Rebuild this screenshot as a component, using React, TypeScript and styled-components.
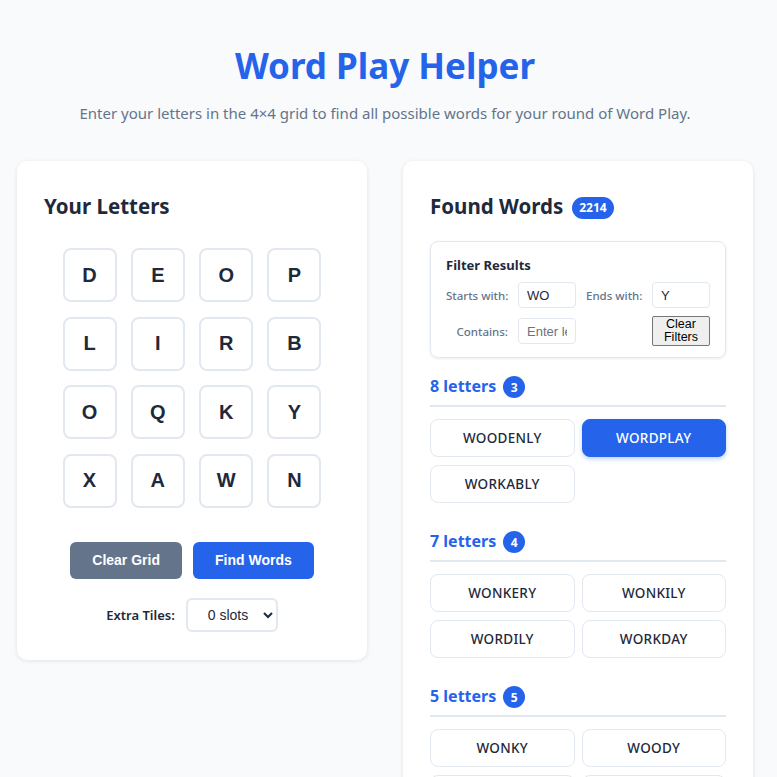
import React from "react";
import styled, { createGlobalStyle } from "styled-components";

const Global = createGlobalStyle`
  html, body { margin: 0; padding: 0; background: #f8fafc; }
  body { font-family: "Noto Sans", "Open Sans", sans-serif; color: #1e293b; }
  * { box-sizing: border-box; }
`;

const Page = styled.div`
  padding: 38px 24px 0 17px;
`;

const Header = styled.header`
  text-align: center;
  margin-bottom: 37px;
`;

const Title = styled.h1`
  margin: 0;
  font-size: 35px;
  font-weight: 700;
  color: #2563eb;
  line-height: 56px;
`;

const Subtitle = styled.p`
  margin: 8px 0 0;
  font-size: 15px;
  color: #64748b;
  line-height: 22px;
`;

const Columns = styled.div`
  display: grid;
  grid-template-columns: 350px 350px;
  gap: 36px;
  align-items: start;
`;

const Card = styled.section`
  background: #fff;
  border-radius: 10px;
  box-shadow: 0 1px 4px rgba(15, 23, 42, 0.1);
  padding: 30px 27px 28px;
`;

const CardTitle = styled.h2`
  margin: 0;
  font-size: 20.5px;
  font-weight: 700;
  color: #1e293b;
  line-height: 30px;
  display: flex;
  align-items: center;
  gap: 9px;
`;

const Grid = styled.div`
  display: grid;
  grid-template-columns: repeat(4, 54px);
  gap: 14.67px 14.33px;
  justify-content: center;
  margin-top: 27px;
`;

const Tile = styled.div`
  width: 54px;
  height: 54px;
  border: 2px solid #e2e8f0;
  border-radius: 8px;
  display: flex;
  align-items: center;
  justify-content: center;
  font-family: "Liberation Sans", Arial, sans-serif;
  font-weight: 700;
  font-size: 20px;
  color: #1e293b;
`;

const Actions = styled.div`
  display: flex;
  justify-content: center;
  gap: 11px;
  margin-top: 34px;
`;

const ActionButton = styled.button<{ $primary?: boolean }>`
  border: none;
  border-radius: 6px;
  height: 37px;
  padding: 0 22px;
  font-family: "Liberation Sans", Arial, sans-serif;
  font-weight: 700;
  font-size: 14px;
  color: #fff;
  background: ${(p) => (p.$primary ? "#2563eb" : "#64748b")};
  cursor: pointer;
`;

const ExtraRow = styled.div`
  display: flex;
  justify-content: center;
  align-items: center;
  gap: 11px;
  margin-top: 19px;
`;

const ExtraLabel = styled.label`
  font-size: 13px;
  font-weight: 600;
  color: #1e293b;
`;

const Select = styled.select`
  width: 92px;
  height: 34px;
  border: 2px solid #e2e8f0;
  border-radius: 6px;
  background: #fff;
  font-family: "Liberation Sans", Arial, sans-serif;
  font-size: 14px;
  color: #1e293b;
  padding: 0 8px 0 16px;
`;

const Badge = styled.span<{ $round?: boolean }>`
  display: inline-flex;
  align-items: center;
  justify-content: center;
  background: #2563eb;
  color: #fff;
  font-size: 12px;
  font-weight: 700;
  height: 22px;
  min-width: 22px;
  padding: ${(p) => (p.$round ? "0" : "0 7px")};
  border-radius: 11px;
  margin-top: 3px;
`;

const FilterBox = styled.div`
  margin-top: 20px;
  border: 1px solid #e2e8f0;
  border-radius: 8px;
  box-shadow: 0 1px 3px rgba(15, 23, 42, 0.08);
  padding: 14px 14px 11px 15px;
`;

const FilterTitle = styled.h3`
  margin: 0 0 8px;
  font-size: 13px;
  font-weight: 700;
  color: #1e293b;
  line-height: 18px;
`;

const FilterGrid = styled.div`
  display: grid;
  grid-template-columns: 62px 58px 56px 58px;
  column-gap: 10px;
  row-gap: 8px;
  align-items: center;
`;

const FilterLabel = styled.label`
  font-size: 11.5px;
  font-weight: 500;
  color: #64748b;
  text-align: right;
  white-space: nowrap;
`;

const FilterInput = styled.input`
  width: 58px;
  height: 26px;
  border: 1px solid #e2e8f0;
  border-radius: 4px;
  padding: 0 8px;
  font-family: "Liberation Sans", Arial, sans-serif;
  font-size: 13px;
  color: #1e293b;
  &::placeholder { color: #6b7280; }
`;

const ClearFilters = styled.button`
  width: 58px;
  height: 30px;
  padding: 0;
  font-family: "Liberation Sans", Arial, sans-serif;
  font-size: 12.5px;
  line-height: 13px;
  color: #000;
  background: #efefef;
  border: 1px solid #767676;
  border-radius: 2px;
`;

const Section = styled.div`
  margin-top: 15px;
  & + & { margin-top: 25px; }
`;

const SectionHead = styled.div`
  display: flex;
  align-items: center;
  gap: 7px;
  padding-bottom: 7px;
  border-bottom: 2px solid #e2e8f0;
  margin-bottom: 12px;
`;

const SectionTitle = styled.h4`
  margin: 0;
  font-size: 16px;
  font-weight: 700;
  color: #2563eb;
`;

const WordGrid = styled.div`
  display: grid;
  grid-template-columns: 1fr 1fr;
  gap: 8px 7px;
`;

const Word = styled.div<{ $active?: boolean }>`
  height: 38px;
  display: flex;
  align-items: center;
  justify-content: center;
  border-radius: 8px;
  border: 1px solid ${(p) => (p.$active ? "#2563eb" : "#e2e8f0")};
  background: ${(p) => (p.$active ? "#2563eb" : "#fff")};
  color: ${(p) => (p.$active ? "#fff" : "#1e293b")};
  box-shadow: ${(p) => (p.$active ? "0 2px 4px rgba(37,99,235,0.3)" : "none")};
  font-size: 13.5px;
  font-weight: 500;
  letter-spacing: 0.3px;
`;

const letters = ["D", "E", "O", "P", "L", "I", "R", "B", "O", "Q", "K", "Y", "X", "A", "W", "N"];

const groups = [
  { n: 8, words: ["WOODENLY", "WORDPLAY", "WORKABLY"], active: "WORDPLAY" },
  { n: 7, words: ["WONKERY", "WONKILY", "WORDILY", "WORKDAY"] },
  { n: 5, words: ["WONKY", "WOODY", "WOOLY", "WORDY", "WORRY"] },
];

export default function App() {
  return (
    <>
      <Global />
      <Page>
        <Header>
          <Title>Word Play Helper</Title>
          <Subtitle>Enter your letters in the 4×4 grid to find all possible words for your round of Word Play.</Subtitle>
        </Header>
        <Columns>
          <Card>
            <CardTitle>Your Letters</CardTitle>
            <Grid>
              {letters.map((l, i) => (
                <Tile key={i}>{l}</Tile>
              ))}
            </Grid>
            <Actions>
              <ActionButton>Clear Grid</ActionButton>
              <ActionButton $primary>Find Words</ActionButton>
            </Actions>
            <ExtraRow>
              <ExtraLabel>Extra Tiles:</ExtraLabel>
              <Select defaultValue="0">
                <option value="0">0 slots</option>
                <option value="1">1 slot</option>
              </Select>
            </ExtraRow>
          </Card>
          <Card>
            <CardTitle>
              Found Words <Badge>2214</Badge>
            </CardTitle>
            <FilterBox>
              <FilterTitle>Filter Results</FilterTitle>
              <FilterGrid>
                <FilterLabel>Starts with:</FilterLabel>
                <FilterInput defaultValue="WO" />
                <FilterLabel>Ends with:</FilterLabel>
                <FilterInput defaultValue="Y" />
                <FilterLabel>Contains:</FilterLabel>
                <FilterInput placeholder="Enter letters" />
                <span />
                <ClearFilters>Clear Filters</ClearFilters>
              </FilterGrid>
            </FilterBox>
            {groups.map((g) => (
              <Section key={g.n}>
                <SectionHead>
                  <SectionTitle>{g.n} letters</SectionTitle>
                  <Badge $round>{g.words.length}</Badge>
                </SectionHead>
                <WordGrid>
                  {g.words.map((w) => (
                    <Word key={w} $active={w === g.active}>
                      {w}
                    </Word>
                  ))}
                </WordGrid>
              </Section>
            ))}
          </Card>
        </Columns>
      </Page>
    </>
  );
}
